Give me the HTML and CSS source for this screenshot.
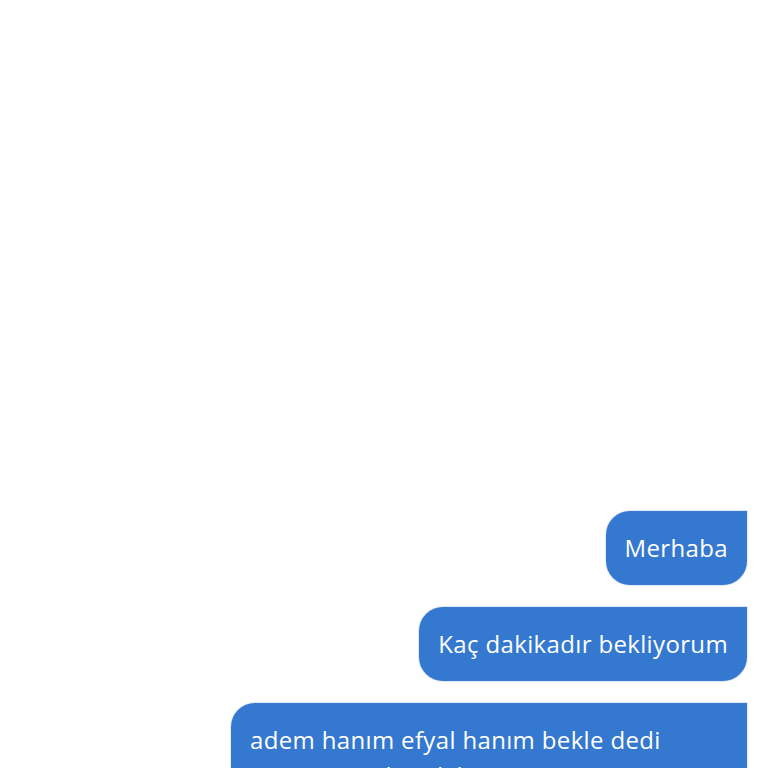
FILE: index.html
```html
<!DOCTYPE html>
<html lang="tr">
<head>
<meta charset="utf-8">
<link rel="stylesheet" href="styles.css">
</head>
<body>
<div class="chat">
  <div class="bubble">Merhaba</div>
  <div class="bubble">Kaç dakikadır bekliyorum</div>
  <div class="bubble">adem hanım efyal hanım bekle dedi yanımıza gelmedi kimse</div>
</div>
</body>
</html>
```
FILE: styles.css
```css
html, body {
  margin: 0;
  padding: 0;
  background: #ffffff;
  height: 100%;
  overflow: hidden;
}
.chat {
  display: flex;
  flex-direction: column;
  align-items: flex-end;
  gap: 22px;
  padding: 511px 21px 0 0;
  font-family: "Open Sans", sans-serif;
}
.bubble {
  background: #3478cf;
  color: #ffffff;
  font-size: 24px;
  letter-spacing: 0.35px;
  line-height: 36px;
  padding: 19px 19px;
  border-radius: 24px 0 24px 24px;
  max-width: 478px;
  box-shadow: 0 0 0 1px rgba(52, 120, 207, 0.15);
}
```
